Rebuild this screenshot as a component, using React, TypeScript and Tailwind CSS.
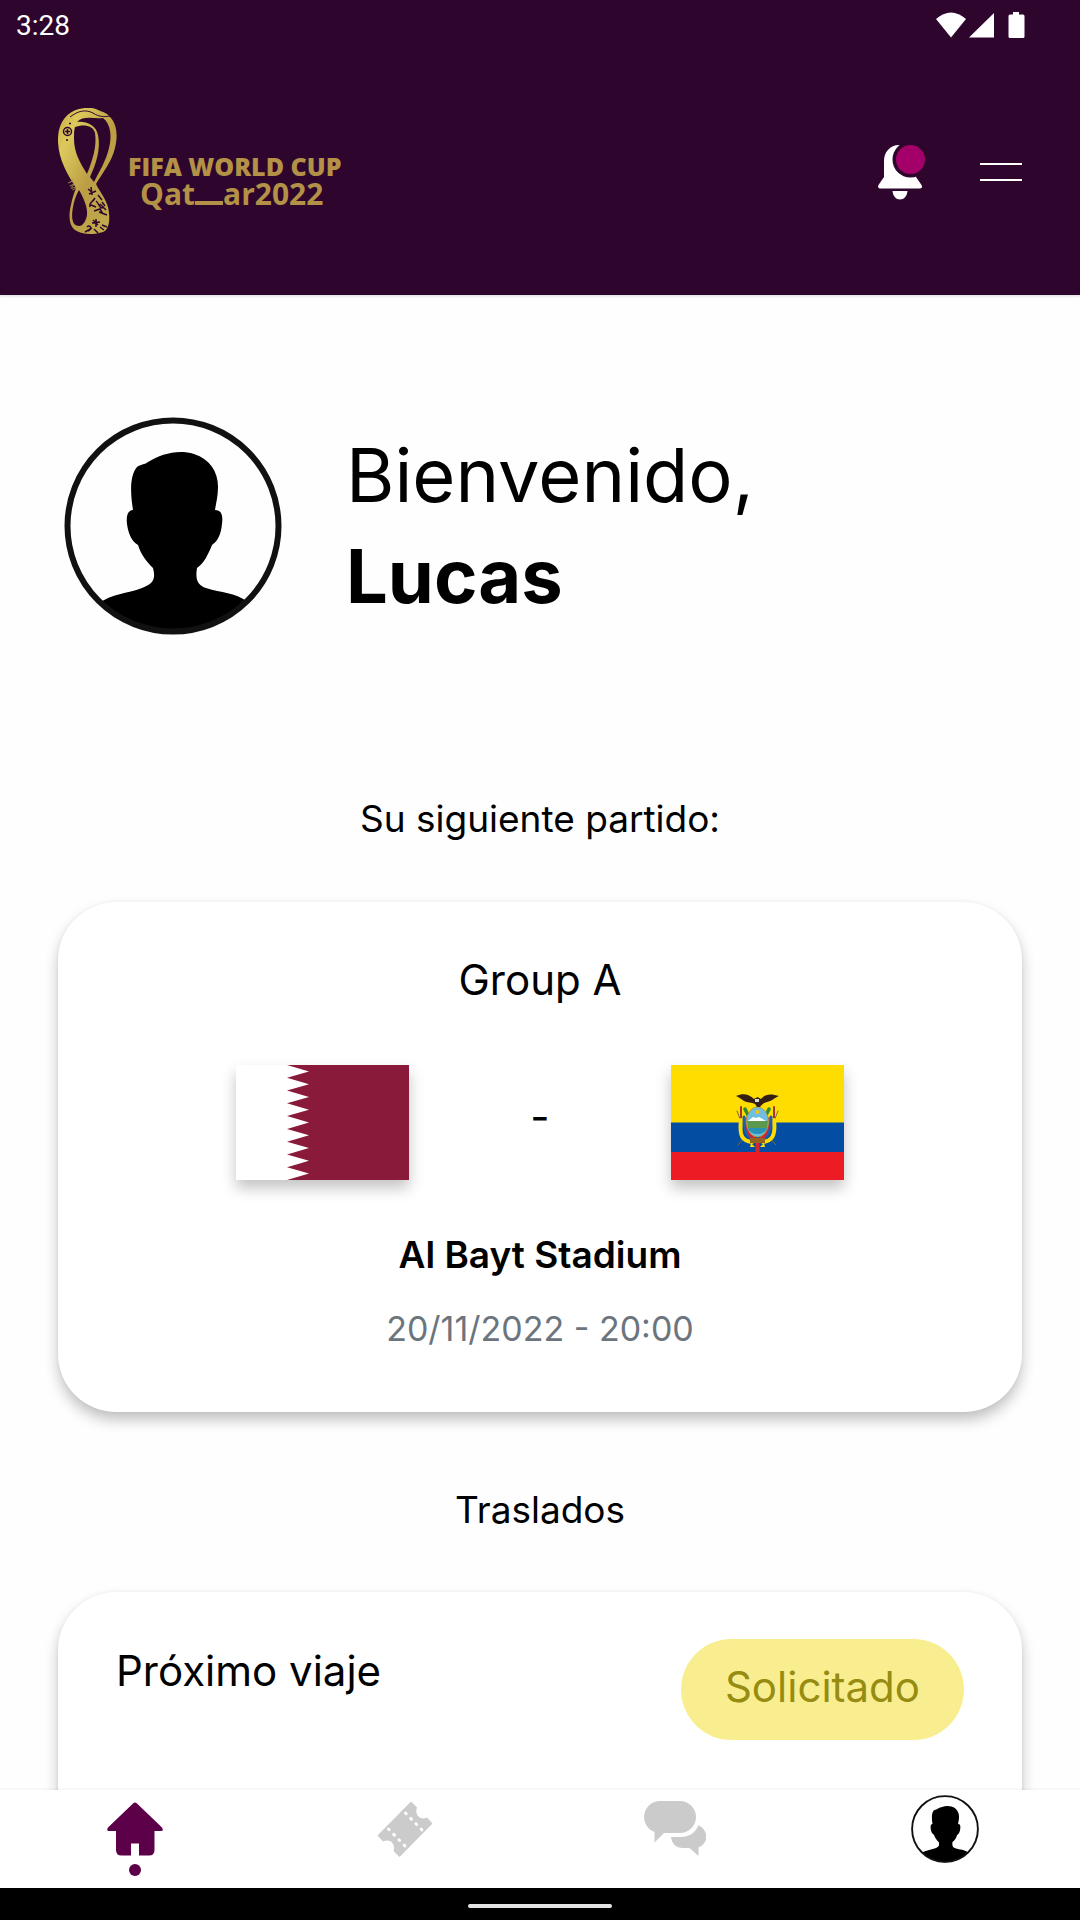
import { ReactNode } from "react";

type StatusIconsProps = {
  className?: string;
};

function StatusIcons({ className }: StatusIconsProps) {
  return (
    <svg viewBox="0 0 90 28" className={className} fill="#fff" aria-hidden="true">
      <path d="M0 7 Q15 -6 30 7 L15 25.500Z" />
      <path d="M33 25.500 L58 1 V25.500Z" />
      <path d="M77 0h6v2.500h4a1.500 1.500 0 0 1 1.500 1.500v20.500a1.500 1.500 0 0 1-1.500 1.500h-13a1.500 1.500 0 0 1-1.500-1.500v-20.500a1.500 1.500 0 0 1 1.500-1.500h3z" />
    </svg>
  );
}

function Emblem() {
  return (
    <svg viewBox="0 0 62 128" className="h-32 w-[62px] shrink-0" aria-hidden="true">
      <defs>
        <linearGradient id="gold" x1="0" y1="0" x2="1" y2="1">
          <stop offset="0" stopColor="#c9a93f" />
          <stop offset="0.2" stopColor="#dcc95c" />
          <stop offset="0.55" stopColor="#bb9d44" />
          <stop offset="1" stopColor="#c3b052" />
        </linearGradient>
      </defs>
      <path
        fill="url(#gold)"
        d="M21 1C27 -.5 35 -1 40 2C45 4 49 5 52 9C59 16 60 28 57 40C54 53 45 64 38 76C43 86 50 93 51 105C52 115 50 122 45 124C36 127 24 127 17 122C10 117 11 105 13 97C14 91 16 85 18 80C10 67 1 53 0 34C-1 15 9 4 21 1Z"
      />
      {/* openings between the ribbons */}
      <g fill="#2e062d">
        <path d="M17 19C25 16 35 17 37 25C39 38 35 51 29 66C22 55 16 44 16 31C16 26 16 22 17 19Z" />
        <path d="M19 14C26 7 35 11 45 10C53 16 54 29 51 40C48 53 41 64 36 74L32 69C38 56 43 41 40 27C38 17 28 13 19 14Z" />
        <path d="M21 82C25 89 30 99 29 107C28 113 25 118 21 118C14 118 13 109 15 99C16 93 18 87 21 82Z" />
      </g>
      <g fill="none" stroke="#2e062d" strokeWidth="1">
        <path d="M12 9C20 3 27 1 35 5C41 9 46 9 52 8" />
        <circle cx="9.500" cy="23.500" r="4" strokeWidth="1.500" />
        <path d="M7 23.500H12M9.500 21V26M8 32H10M11 15.500H13" strokeWidth="1.500" />
        <path d="M30 81L35 85M33 79L34 87M31 86L38 83M40 87L44 92M37 90C34 95 31 94 32 99M33 97L38 99M38 93C42 96 41 102 46 99M42 96L48 102M36 103L42 101L45 106M41 104L49 107M44 94L47 98" strokeWidth="1.500" />
        <path d="M34 115L42 114M38 111L38 119M35 112L40 117M29 119C32 116 35 121 30 123M36 121L40 125M42 119L46 122M27 124L34 120M44 117L49 119" strokeWidth="1.500" />
      </g>
      <text x="0" y="0" transform="translate(9 73) rotate(62)" fill="#b39146" fontSize="8" fontFamily="Liberation Sans, sans-serif">
        TM
      </text>
    </svg>
  );
}

function WorldCupLogo() {
  return (
    <a href="#" className="flex items-center gap-2 text-[#b39146]" aria-label="FIFA World Cup Qatar 2022">
      <Emblem />
      <div className="pt-4 font-['Open_Sans',sans-serif]">
        <p className="text-[25px] leading-7 font-extrabold whitespace-nowrap">FIFA WORLD CUP</p>
        <p className="flex items-baseline pl-3 text-3xl leading-7 font-bold">
          Qat
          <span className="h-1 w-7 bg-[#b39146]" />
          ar2022
        </p>
      </div>
    </a>
  );
}

function BellIcon() {
  return (
    <svg viewBox="0 0 48 56" className="h-14 w-12" aria-hidden="true">
      <path
        fill="#fff"
        d="M21 1C12 1 6 8 6 17V33L.5 41C-.5 43 .5 44.500 2 44.500H42C44 44.500 44.500 43 43.500 41L38 33V17C38 8 31 1 21 1Z"
      />
      <path fill="#fff" d="M14.500 47H29.500C29 52 26 55.500 22 55.500S15 52 14.500 47Z" />
      <circle cx="32.500" cy="15.500" r="18" fill="#2e062d" />
      <circle cx="32.500" cy="15.500" r="14.500" fill="#a4006a" />
    </svg>
  );
}

function Avatar({ className, id }: { className: string; id: string }) {
  return (
    <svg viewBox="0 0 218 218" className={className} role="img" aria-label="Foto de perfil">
      <clipPath id={id}>
        <circle cx="109" cy="109" r="107" />
      </clipPath>
      <path
        clipPath={`url(#${id})`}
        d="M69 93C66 75 66 58 73 50C77 47 80 48 84 45C97 37 114 32 130 37C146 42 154 55 154 70C154 79 152 86 151 93C158 93 159 99 158 107C157 117 154 124 148 128C144 138 140 146 133 151C131 163 134 168 142 171C158 176 170 175 184 185L184 218H34V187C48 176 63 177 78 171C89 167 92 162 89 151C83 145 77 138 74 128C67 124 64 115 63 107C62 99 64 93 69 93Z"
      />
      <circle cx="109" cy="109" r="105.500" fill="none" stroke="#111" strokeWidth="6" />
    </svg>
  );
}

function QatarFlag() {
  return (
    <svg viewBox="0 0 173 115" className="h-[115px] w-[173px] shadow-[0_8px_14px_rgba(0,0,0,0.24)]" role="img" aria-label="Qatar">
      <path fill="#fff" d="M0 0h173v115h-173z" />
      <path
        fill="#8a1a3a"
        d="M173 0H51L73 6.390L51 12.780L73 19.170L51 25.560L73 31.940L51 38.330L73 44.720L51 51.110L73 57.500L51 63.890L73 70.280L51 76.670L73 83.060L51 89.440L73 95.830L51 102.220L73 108.610L51 115H173Z"
      />
    </svg>
  );
}

function EcuadorFlag() {
  return (
    <svg viewBox="0 0 173 115" className="h-[115px] w-[173px] shadow-[0_8px_14px_rgba(0,0,0,0.24)]" role="img" aria-label="Ecuador">
      <path fill="#ffdd00" d="M0 0h173v58h-173z" />
      <path fill="#034ea2" d="M0 57.500h173v30h-173z" />
      <path fill="#ed1c24" d="M0 87h173v28h-173z" />
      <g fill="none" strokeLinecap="round">
        <path stroke="#7c6a3c" strokeWidth="1" d="M67 80L74 72M105 80L98 72M66 46L70 56M107 46L103 56" />
        <path stroke="#a33" strokeWidth="2" d="M70 42V55M103 42V55" />
        <path stroke="#2f8a3a" strokeWidth="3.500" d="M74 44L79 54M98 44L93 54" />
        <path stroke="#ffdd00" strokeWidth="4" d="M70 55C68 72 72 76 81 77M103 55C105 72 100 76 92 77" />
        <path stroke="#1b5fae" strokeWidth="3" d="M73 52C73 66 76 71 80 73M100 52C100 66 97 71 93 73" />
        <path stroke="#d8242f" strokeWidth="3.500" d="M76 54C76 66 79 71 83 73M97 54C97 66 94 71 90 73" />
      </g>
      <ellipse cx="86.500" cy="57" rx="11" ry="15" fill="#6fc0e0" stroke="#a99b4a" strokeWidth="1" />
      <path fill="#fff" d="M77 56L82 52L85 53L88 52L95 56Z" />
      <path fill="#5b9a4e" d="M76 56H97L96 63H77Z" />
      <path fill="#2a91b8" d="M77 63H96C94 71 79 71 77 63Z" />
      <circle cx="86.500" cy="47" r="2" fill="#f4c21c" />
      <path fill="#96641e" d="M79 73H94V78H79Z" />
      <path fill="#ffdd00" d="M80 78L84 82H79ZM93 78L89 82H94Z" />
      <path fill="#d8242f" d="M84.500 78H88.500V87H84.500Z" />
      <path
        fill="#352015"
        d="M65 31C72 28 78 29 83 34L86.500 32L90 34C95 28 101 29 108 31C103 33 101 36 96 37C93 38 91 39 89 42L86 42L84 39C81 37 76 38 73 36C70 34 68 32 65 31Z"
      />
      <path fill="#ddd" d="M84 34H88V37H84Z" />
    </svg>
  );
}

function HomeIcon() {
  return (
    <svg viewBox="0 0 56 54" className="h-[54px] w-14" fill="#5c0049" aria-hidden="true">
      <path d="M26 1.500Q28 -.5 30 1.500L55 25.500Q57 29 54 29H47.500V48Q47.500 53.500 42 53.500H32V41.500H24V53.500H14.500Q9 53.500 9 48V29H2Q-1 29 1 25.500Z" />
    </svg>
  );
}

function TicketIcon() {
  return (
    <svg viewBox="0 0 56 56" className="size-14" fill="#cbcbcb" aria-hidden="true">
      <path d="M34 .5L40 6.500C37 14 44 20 50 16.500L55.500 22.500L22.500 56L16.500 50C19 43 13 37 6 40.500L.5 34.500Z" />
      <path d="M28.500 12L46 30M11.500 28L29 46" stroke="#fff" strokeWidth="3" strokeLinecap="round" strokeDasharray="1 6.500" fill="none" />
    </svg>
  );
}

function ChatIcon() {
  return (
    <svg viewBox="0 0 62 56" className="h-14 w-[62px]" fill="#cbcbcb" aria-hidden="true">
      <path d="M16 0H36A16 16 0 0 1 36 32H20L10.500 41.500V31A16 16 0 0 1 16 0Z" />
      <path d="M27 36H37C46 36 52 31 54.500 24C65 30 65 42 54.500 46.500V55L45.500 47H39C32 47 28 43 27 36Z" />
    </svg>
  );
}

function NavItem({ label, active, children }: { label: string; active?: boolean; children: ReactNode }) {
  return (
    <a href="#" aria-label={label} className="flex flex-1 flex-col items-center pt-[5px]">
      <span className="flex h-[68px] items-center">{children}</span>
      {active && <span className="mt-px size-3 rounded-full bg-[#5c0049]" />}
    </a>
  );
}

const cardClass =
  "rounded-[58px] bg-white shadow-[0_8px_14px_rgba(0,0,0,0.24),0_0_3px_rgba(0,0,0,0.06)]";

export default function App() {
  return (
    <div className="flex h-screen flex-col overflow-hidden bg-[#fefefe] font-['Inter',sans-serif] text-black">
      <header className="shrink-0 bg-[#2e062d] pb-[59px] shadow-[0_1px_3px_rgba(0,0,0,0.15)]">
        <div className="flex h-12 items-center justify-between pt-1 pr-[54px] pl-4 text-white">
          <span className="font-['Roboto',sans-serif] text-[28px] leading-8">3:28</span>
          <StatusIcons className="h-7 w-[90px]" />
        </div>
        <div className="flex items-center justify-between px-[58px] pt-[60px]">
          <WorldCupLogo />
          <div className="flex items-center gap-[54px]">
            <button type="button" aria-label="Notificaciones">
              <BellIcon />
            </button>
            <button type="button" aria-label="Menú" className="flex w-[42px] flex-col gap-[14px]">
              <span className="h-0.5 w-full bg-white" />
              <span className="h-0.5 w-full bg-white" />
            </button>
          </div>
        </div>
      </header>

      <main className="min-h-0 flex-1 overflow-hidden px-[58px]">
        <section className="flex items-center gap-16 pt-[122px] pl-[6px]">
          <Avatar id="profile" className="size-[218px]" />
          <h1 className="text-[74px] leading-[101px]">
            Bienvenido,
            <br />
            <strong className="font-bold">Lucas</strong>
          </h1>
        </section>

        <h2 className="mt-[159px] text-center text-[37px] leading-[50px]">Su siguiente partido:</h2>

        <section className={`mt-[58px] flex flex-col items-center pt-[50px] pb-[58px] ${cardClass}`}>
          <h3 className="text-[42px] leading-[56px]">Group A</h3>
          <div className="mt-[57px] flex w-full items-center justify-center gap-[121px]">
            <QatarFlag />
            <span className="pb-3 text-[42px] leading-[56px]">-</span>
            <EcuadorFlag />
          </div>
          <p className="mt-[50px] text-[37px] leading-[50px] font-semibold">Al Bayt Stadium</p>
          <p className="mt-6 text-[34px] leading-[50px] text-[#6c757d]">20/11/2022 - 20:00</p>
        </section>

        <h2 className="mt-[73px] text-center text-[37px] leading-[50px]">Traslados</h2>

        <section className={`mt-[57px] flex min-h-96 items-start justify-between px-[58px] pt-[47px] ${cardClass}`}>
          <h3 className="pt-1 text-[42px] leading-[56px]">Próximo viaje</h3>
          <span className="rounded-full bg-[#f9ee8f] px-11 pt-5 pb-[25px] text-[42px] leading-[56px] text-[#968c12]">
            Solicitado
          </span>
        </section>
      </main>

      <nav className="relative flex h-[98px] shrink-0 bg-white shadow-[0_0_3px_rgba(0,0,0,0.1)]">
        <NavItem label="Inicio" active>
          <HomeIcon />
        </NavItem>
        <NavItem label="Entradas">
          <TicketIcon />
        </NavItem>
        <NavItem label="Mensajes">
          <ChatIcon />
        </NavItem>
        <NavItem label="Perfil">
          <Avatar id="tab-profile" className="size-[68px]" />
        </NavItem>
      </nav>

      <div className="flex h-8 shrink-0 items-center justify-center bg-black pt-1">
        <span className="h-1 w-36 rounded-full bg-[#e4e4e4]" />
      </div>
    </div>
  );
}
